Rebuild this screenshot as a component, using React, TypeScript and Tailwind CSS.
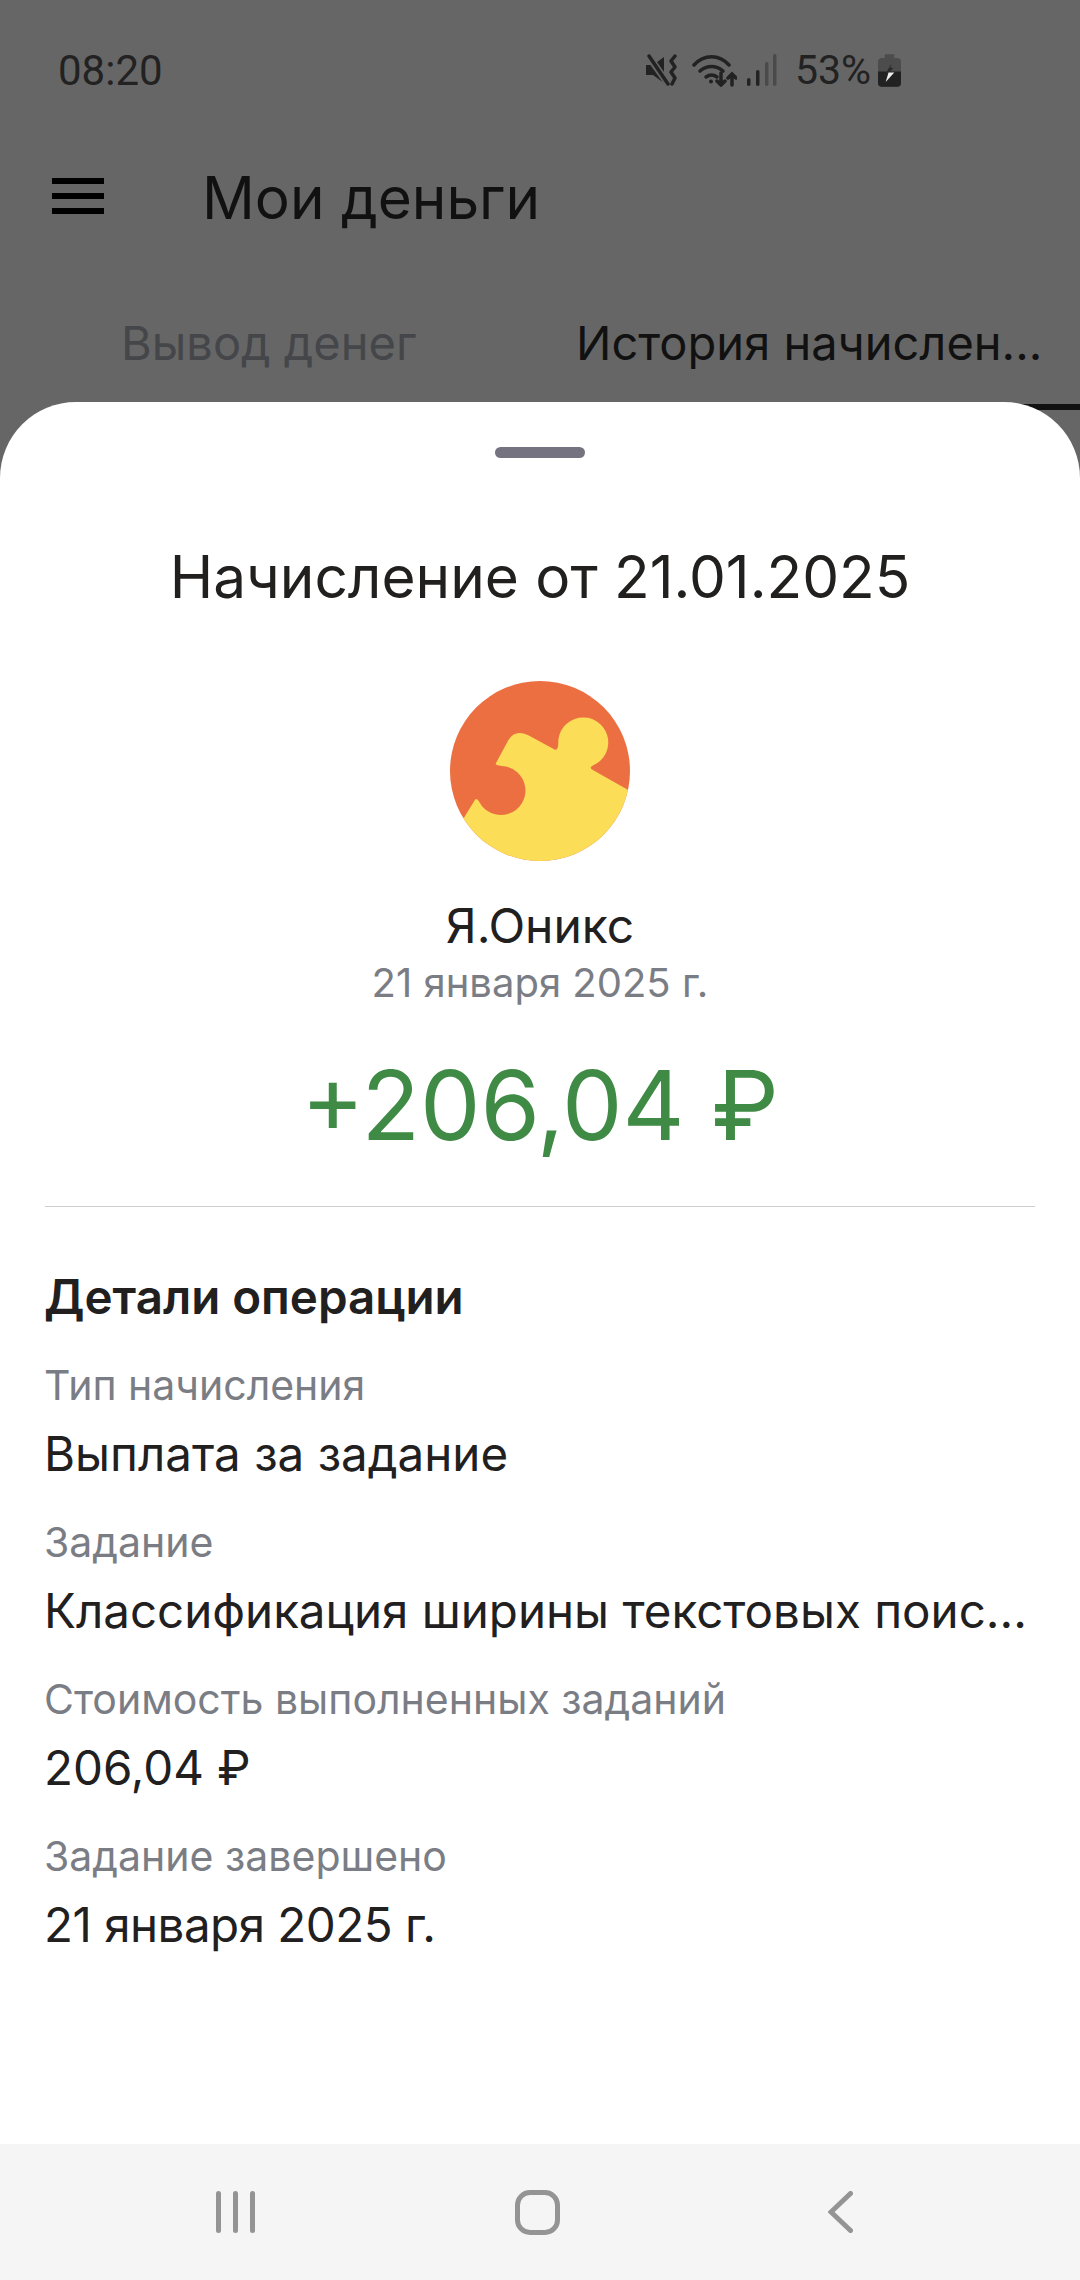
import React from 'react';

const font = { fontFamily: 'Inter, sans-serif' };

const Row: React.FC<{ label: string; value: string; valueClass?: string }> = ({ label, value, valueClass }) => (
    <div className="h-[157px]">
        <div className="text-[41px] leading-[50px] text-[#7b7d85] whitespace-nowrap">{label}</div>
        <div className={`text-[47.5px] leading-[58px] mt-[15px] text-[#21201f] whitespace-nowrap ${valueClass ?? ''}`}>{value}</div>
    </div>
);

const MuteIcon = () => (
    <svg width="32" height="32" viewBox="0 0 32 32" fill="#222">
        <path d="M0 11h7l11-8v26L7 21H0z" />
        <path d="M1 0l22 31" stroke="#666" strokeWidth="7" />
        <path d="M3 2l19 28" stroke="#222" strokeWidth="3.5" strokeLinecap="round" />
        <path d="M29 2l-4 5 4 6-4 5 4 6-3 6" fill="none" stroke="#222" strokeWidth="3.5" strokeLinecap="round" strokeLinejoin="round" />
    </svg>
);

const WifiIcon = () => (
    <svg width="45" height="33" viewBox="0 0 45 33" fill="none" stroke="#222" strokeWidth="3.5" strokeLinecap="round">
        <path d="M2 11c10-11 25-11 35 0" />
        <path d="M8 17c7-6 16-6 23 0" />
        <path d="M14 23c4-3 7-3 11 0" />
        <circle cx="19" cy="27.5" r="2" fill="#222" stroke="none" />
        <path d="M29 19v12M25 27l4 4 4-4" />
        <path d="M40 31V20M36 24l4-4 4 4" />
    </svg>
);

const SignalIcon = () => (
    <svg width="30" height="32" viewBox="0 0 30 32">
        <rect x="0" y="24" width="3.5" height="8" rx="1.7" fill="#222" />
        <rect x="9" y="16" width="3.5" height="16" rx="1.7" fill="#222" />
        <rect x="18" y="8" width="3.5" height="24" rx="1.7" fill="#4a4a4a" />
        <rect x="26" y="0" width="3.5" height="32" rx="1.7" fill="#4a4a4a" />
    </svg>
);

const BatteryIcon = () => (
    <svg width="23" height="33" viewBox="0 0 24 34">
        <path d="M7 0h10v4h3a4 4 0 0 1 4 4v22a4 4 0 0 1-4 4H4a4 4 0 0 1-4-4V8a4 4 0 0 1 4-4h3z" fill="#4c4c4c" />
        <path d="M0 18h24v12a4 4 0 0 1-4 4H4a4 4 0 0 1-4-4z" fill="#222" />
        <path d="M14 10l-6 10h3l5-6h-3z" fill="#2a2a2a" />
        <path d="M11 19h6l-9 10z" fill="#eeeeee" />
    </svg>
);

const PuzzleLogo = () => (
    <svg width="180" height="180" viewBox="0 0 180 180">
        <defs>
            <clipPath id="logo-circle">
                <circle cx="90" cy="90" r="90" />
            </clipPath>
        </defs>
        <g clipPath="url(#logo-circle)">
            <rect width="180" height="180" fill="#ec6f42" />
            <path
                d="M14 136.7L25 118.7Q27 116.8 29.3 121A24.5 24.5 0 1 0 51.7 85L47.7 84.3Q45 83.5 46 82L58.3 59.3Q65 48 78.3 54.3L105 68.7Q108 69 108.3 62.7A25 25 0 1 1 143.3 84.3Q138 86.7 143.3 89.3L180 110V180H0V136.7Z"
                fill="#fbdd58"
            />
        </g>
    </svg>
);

const App: React.FC = () => {
    return (
        <div className="relative h-[2280px] w-[1080px] overflow-hidden bg-[#666666]" style={font}>
            <div className="h-[410px] bg-[#666666]">
                <div className="flex h-[140px] items-center pl-[58px] pr-[179px] text-[#222222]" style={{ fontFamily: 'Roboto, sans-serif' }}>
                    <span className="text-[42px]">08:20</span>
                    <div className="ml-auto flex items-center">
                        <MuteIcon />
                        <div className="ml-[14px]"><WifiIcon /></div>
                        <div className="ml-[10px]"><SignalIcon /></div>
                        <span className="ml-[18px] mt-[2px] text-[41px]">53%</span>
                        <div className="ml-[7px]"><BatteryIcon /></div>
                    </div>
                </div>
                <div className="flex items-center h-[116px] pl-[52px]">
                    <div className="mb-[5px] flex w-[52px] flex-col gap-[9px]">
                        <div className="h-[6px] bg-black" />
                        <div className="h-[6px] bg-black" />
                        <div className="h-[6px] bg-black" />
                    </div>
                    <span className="ml-[98px] text-[58.5px] text-[#111111]">Мои деньги</span>
                </div>
                <div className="flex mt-[57px] text-[47px] leading-[60px]">
                    <div className="w-[540px] pl-[121px] text-[#44464a] whitespace-nowrap">Вывод денег</div>
                    <div className="text-[#111111] ml-[36px] whitespace-nowrap">История начислен...</div>
                </div>
                <div className="ml-[540px] mt-[31px] h-[6px] bg-[#111111]" />
            </div>

            <div className="absolute left-0 top-[402px] w-[1080px] h-[1742px] rounded-t-[76px] bg-white">
                <div className="mx-auto mt-[45px] h-[11px] w-[90px] rounded-full bg-[#75737f]" />
                <h2 className="mt-[84px] text-center text-[58.5px] leading-[70px] text-[#21201f]">Начисление от 21.01.2025</h2>
                <div className="mt-[69px] flex justify-center">
                    <PuzzleLogo />
                </div>
                <div className="mt-[36px] text-center text-[48px] leading-[58px] text-[#21201f]">Я.Оникс</div>
                <div className="mt-[3px] text-center text-[40px] leading-[50px] text-[#7b7d85]">21 января 2025 г.</div>
                <div className="mt-[42px] text-center text-[96px] leading-[110px] text-[#3f8a45]">+206,04 ₽</div>
                <div className="mx-[45px] mt-[46px] h-[1px] bg-[#cfcfcf]" />
                <div className="pl-[44px] pr-[45px] pt-[61px]">
                    <h3 className="text-[47.5px] leading-[58px] font-semibold text-[#21201f] whitespace-nowrap">Детали операции</h3>
                    <div className="mt-[34px]">
                        <Row label="Тип начисления" value="Выплата за задание" />
                        <Row label="Задание" value="Классификация ширины текстовых поис..." />
                        <Row label="Стоимость выполненных заданий" value="206,04 ₽" />
                        <Row label="Задание завершено" value="21 января 2025 г." valueClass="tracking-[-0.5px]" />
                    </div>
                </div>
            </div>

            <div className="absolute left-0 bottom-0 flex h-[136px] w-[1080px] items-center bg-[#f5f5f5]">
                <div className="ml-[216px] flex gap-[12px]">
                    <div className="h-[42px] w-[5px] rounded-full bg-[#949494]" />
                    <div className="h-[42px] w-[5px] rounded-full bg-[#949494]" />
                    <div className="h-[42px] w-[5px] rounded-full bg-[#949494]" />
                </div>
                <div className="ml-[260px] h-[45px] w-[45px] rounded-[15px] border-[5px] border-[#949494]" />
                <svg className="ml-[268px]" width="25" height="42" viewBox="0 0 25 42" fill="none" stroke="#949494" strokeWidth="5" strokeLinecap="round" strokeLinejoin="miter">
                    <path d="M22.5 2.5L3 21l19.5 18.5" />
                </svg>
            </div>
        </div>
    );
};

export default App;
